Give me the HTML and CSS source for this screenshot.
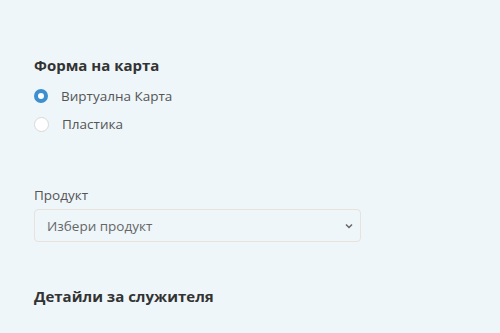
FILE: index.html
```html
<!DOCTYPE html>
<html lang="bg">
<head>
<meta charset="utf-8">
<link rel="stylesheet" href="styles.css">
</head>
<body>
<div class="page">
  <section class="group">
    <h2 class="title">Форма на карта</h2>
    <label class="radio"><span class="dot checked"></span><span>Виртуална Карта</span></label>
    <label class="radio"><span class="dot"></span><span>Пластика</span></label>
  </section>
  <section class="field">
    <div class="label">Продукт</div>
    <div class="select"><span>Избери продукт</span>
      <svg class="chev" width="8" height="6" viewBox="0 0 8 6"><path d="M1 1.5 L4 4.5 L7 1.5" fill="none" stroke="#666" stroke-width="1.5"/></svg>
    </div>
  </section>
  <h2 class="title details">Детайли за служителя</h2>
</div>
</body>
</html>
```
FILE: styles.css
```css
html, body { margin: 0; padding: 0; }
body { background: #eef6fa; font-family: "Open Sans", "Noto Sans", sans-serif; color: #444; width: 500px; height: 333px; overflow: hidden; }
.page { padding: 54px 0 0 34px; width: 327px; }
.title { margin: 0; font-size: 15px; font-weight: 700; color: #333; line-height: 22px; }
.group { display: flex; flex-direction: column; }
.radio { display: flex; align-items: center; gap: 13px; height: 22px; margin-top: 9px; font-size: 13.5px; color: #555; }
.radio + .radio { margin-top: 6px; }
.dot { width: 13px; height: 13px; border-radius: 50%; border: 1px solid #d8d8d8; background: #fff; box-sizing: content-box; }
.dot.checked { background: #fff; border: 4.5px solid #3d8fd0; width: 6px; height: 6px; }
.field { margin-top: 51px; }
.label { font-size: 13.5px; color: #555; line-height: 18px; }
.select { margin-top: 5px; height: 31px; border: 1px solid #e8e2da; border-radius: 4px; display: flex; align-items: center; justify-content: space-between; padding: 0 7px 0 12px; font-size: 13.5px; color: #666; }
.details { margin-top: 43px; }
```
